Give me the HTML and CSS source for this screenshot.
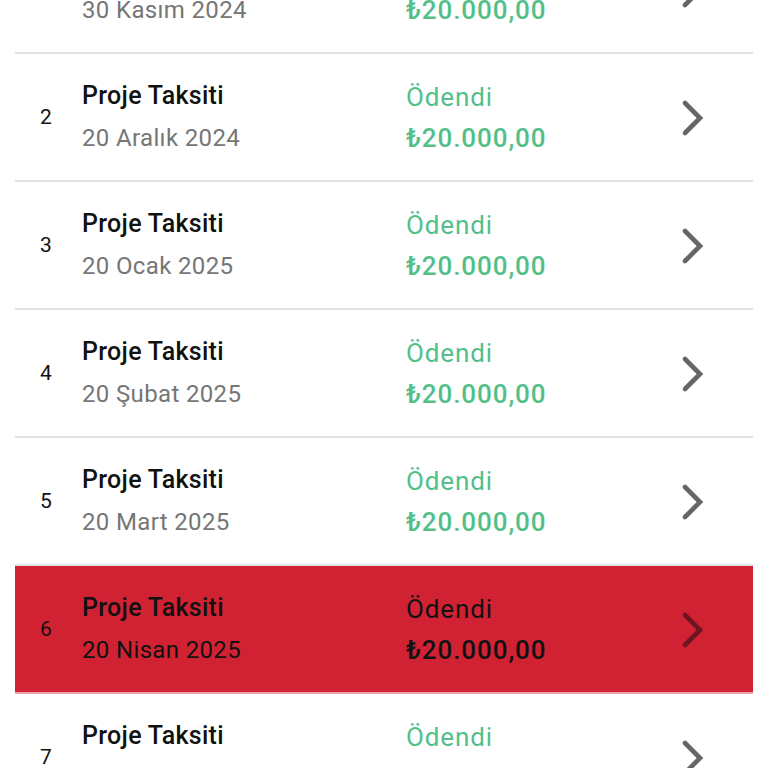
FILE: index.html
```html
<!DOCTYPE html>
<html>
<head>
<meta charset="utf-8">
<link rel="stylesheet" href="styles.css">
</head>
<body>
<div class="list">
  <div class="row">
    <div class="num">1</div>
    <div class="info"><div class="title">Proje Taksiti</div><div class="date">30 Kasım 2024</div></div>
    <div class="pay"><div class="status">Ödendi</div><div class="amount">₺20.000,00</div></div>
    <svg class="chev" viewBox="0 0 26 38"><path d="M5 4 L20 19 L5 34" /></svg>
  </div>
  <div class="row">
    <div class="num">2</div>
    <div class="info"><div class="title">Proje Taksiti</div><div class="date">20 Aralık 2024</div></div>
    <div class="pay"><div class="status">Ödendi</div><div class="amount">₺20.000,00</div></div>
    <svg class="chev" viewBox="0 0 26 38"><path d="M5 4 L20 19 L5 34" /></svg>
  </div>
  <div class="row">
    <div class="num">3</div>
    <div class="info"><div class="title">Proje Taksiti</div><div class="date">20 Ocak 2025</div></div>
    <div class="pay"><div class="status">Ödendi</div><div class="amount">₺20.000,00</div></div>
    <svg class="chev" viewBox="0 0 26 38"><path d="M5 4 L20 19 L5 34" /></svg>
  </div>
  <div class="row">
    <div class="num">4</div>
    <div class="info"><div class="title">Proje Taksiti</div><div class="date">20 Şubat 2025</div></div>
    <div class="pay"><div class="status">Ödendi</div><div class="amount">₺20.000,00</div></div>
    <svg class="chev" viewBox="0 0 26 38"><path d="M5 4 L20 19 L5 34" /></svg>
  </div>
  <div class="row">
    <div class="num">5</div>
    <div class="info"><div class="title">Proje Taksiti</div><div class="date">20 Mart 2025</div></div>
    <div class="pay"><div class="status">Ödendi</div><div class="amount">₺20.000,00</div></div>
    <svg class="chev" viewBox="0 0 26 38"><path d="M5 4 L20 19 L5 34" /></svg>
  </div>
  <div class="row active">
    <div class="num">6</div>
    <div class="info"><div class="title">Proje Taksiti</div><div class="date">20 Nisan 2025</div></div>
    <div class="pay"><div class="status">Ödendi</div><div class="amount">₺20.000,00</div></div>
    <svg class="chev" viewBox="0 0 26 38"><path d="M5 4 L20 19 L5 34" /></svg>
  </div>
  <div class="row">
    <div class="num">7</div>
    <div class="info"><div class="title">Proje Taksiti</div><div class="date">20 Mayıs 2025</div></div>
    <div class="pay"><div class="status">Ödendi</div><div class="amount">₺24.000,00</div></div>
    <svg class="chev" viewBox="0 0 26 38"><path d="M5 4 L20 19 L5 34" /></svg>
  </div>
</div>
</body>
</html>
```

FILE: styles.css
```css
html, body {
  margin: 0;
  padding: 0;
  background: #ffffff;
  overflow: hidden;
  height: 768px;
}
body {
  font-family: Roboto, "Noto Sans", sans-serif;
}
.list {
  margin: -74px 15px 0 15px;
}
.row {
  display: flex;
  align-items: center;
  height: 126px;
  border-bottom: 2px solid #e2e2e2;
  box-sizing: content-box;
}
.row.active {
  background: #d12234;
  border-bottom-color: #e9a0a6;
}
.num {
  width: 26px;
  margin-left: 25px;
  font-size: 21px;
  color: #111;
}
.info {
  margin-left: 16px;
  width: 324px;
}
.title {
  font-size: 25px;
  font-weight: 500;
  letter-spacing: 0.3px;
  color: #111;
  line-height: 42px;
}
.date {
  font-size: 24px;
  letter-spacing: 0.35px;
  color: #767676;
  line-height: 42px;
}
.pay {
  width: 274px;
}
.status {
  font-size: 26px;
  letter-spacing: 0.9px;
  color: #52bf8a;
  line-height: 42px;
}
.amount {
  font-size: 26px;
  font-weight: 500;
  letter-spacing: 0.9px;
  color: #52bf8a;
  line-height: 42px;
  margin-top: -1px;
}
.chev {
  width: 26px;
  height: 38px;
  margin-top: 2px;
}
.chev path {
  fill: none;
  stroke: #666666;
  stroke-width: 4.6;
  stroke-linecap: round;
  stroke-linejoin: miter;
}
.active .title, .active .date, .active .status, .active .amount {
  color: #111;
}
.active .chev path {
  stroke: #6e1620;
}
```
